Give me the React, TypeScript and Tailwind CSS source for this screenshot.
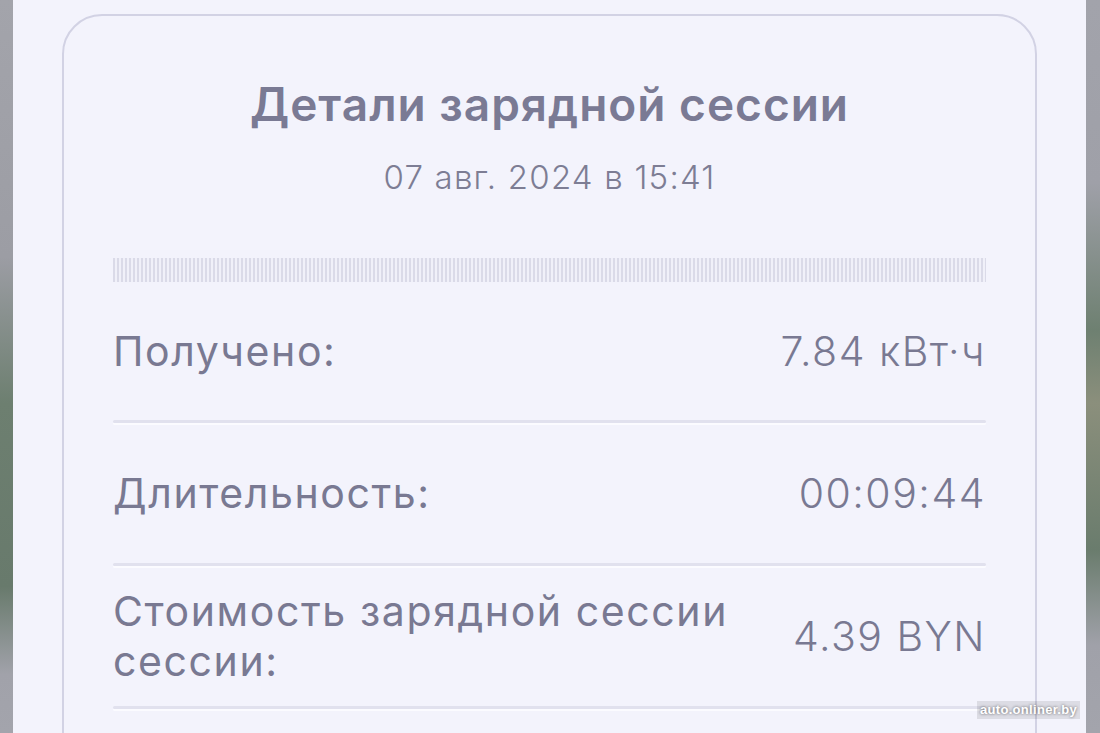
const rows = [
    { label: 'Получено:', value: '7.84 кВт·ч' },
    { label: 'Длительность:', value: '00:09:44' },
    { label: 'Стоимость зарядной сессии сессии:', value: '4.39 BYN' },
];

export default function App() {
    return (
        <div className="relative flex h-[733px] w-[1100px] overflow-hidden bg-[#f3f3fc] font-['Inter',sans-serif]">
            {/* blurred phone edge, left */}
            <div className="w-[13px] shrink-0 bg-[linear-gradient(to_bottom,#a3a4ab_0%,#9c9da4_35%,#6d7f70_55%,#687a6c_80%,#a1a2aa_92%,#a3a4ac_100%)]" />

            <div className="flex-1 pl-[49px] pr-[49px] pt-[14px]">
                <div className="h-[800px] rounded-[40px] border-2 border-[#d2d2e4] bg-[#f3f3fc] px-[49px] pt-[62px]">
                    <h1 className="text-center text-[46px] font-semibold leading-[52px] tracking-[1px] text-[#7a7a94]">
                        Детали зарядной сессии
                    </h1>
                    <div className="mt-[27px] text-center text-[33px] font-light leading-[40px] tracking-[1.2px] text-[#7d7d94]">
                        07 авг. 2024 в 15:41
                    </div>

                    <div className="mt-[61px] h-[24px] bg-[repeating-linear-gradient(to_right,#dadae8_0px,#dadae8_2px,#f0f0f9_2px,#f0f0f9_4px)]" />

                    {rows.map((row, i) => (
                        <div key={row.value}>
                            <div className={`flex items-center justify-between gap-8 ${i === 0 ? 'h-[138px]' : 'h-[140px]'}`}>
                                <div className="max-w-[640px] text-[41px] leading-[50px] tracking-[1.6px] text-[#797992]">
                                    {row.label}
                                </div>
                                <div className="whitespace-nowrap text-[41px] font-light leading-[50px] tracking-[1.5px] text-[#797992]">
                                    {row.value}
                                </div>
                            </div>
                            <div className="h-[3px] rounded-full bg-[#e1e1ee] shadow-[0_2px_0_#fbfbff]" />
                        </div>
                    ))}
                </div>
            </div>

            {/* blurred phone edge, right */}
            <div className="w-[14px] shrink-0 bg-[linear-gradient(to_bottom,#a2a3ab_0%,#9fa0a8_25%,#6e8071_45%,#8b8f7c_55%,#6a7c6d_75%,#a0a1a9_88%,#a3a4ac_100%)]" />

            <div className="absolute bottom-[14px] right-[20px] bg-[#00000018] px-[3px] font-['Liberation_Sans',sans-serif] text-[13px] font-bold leading-[18px] tracking-[0.3px] text-white [text-shadow:0_0_3px_rgba(0,0,0,0.6)]">
                auto.onliner.by
            </div>
        </div>
    );
}
